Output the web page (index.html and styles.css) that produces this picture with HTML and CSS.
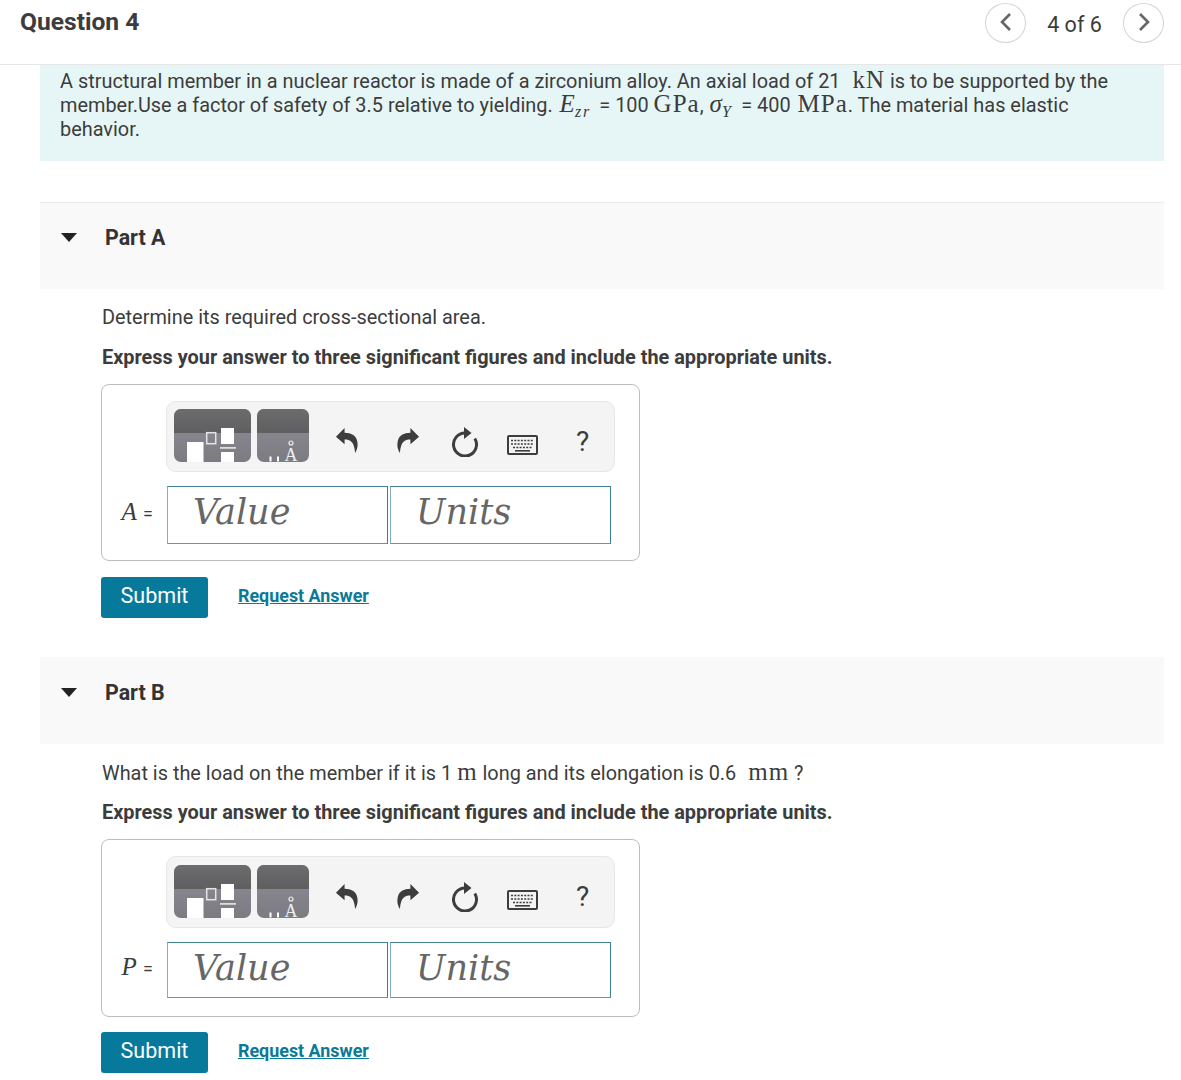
FILE: index.html
```html
<!DOCTYPE html>
<html lang="en">
<head>
    <meta charset="UTF-8">
    <meta name="viewport" content="width=device-width, initial-scale=1.0">
    <title>Question 4</title>
    <link rel="stylesheet" href="styles.css">
</head>
<body>

    <!-- shared toolbar icons -->
    <svg class="icon-defs" width="0" height="0">
        <defs>
            <linearGradient id="tile-top" x1="0" y1="0" x2="0" y2="1">
                <stop offset="0" stop-color="#6c6c6e"/>
                <stop offset="1" stop-color="#5f5f60"/>
            </linearGradient>
            <linearGradient id="tile-bottom" x1="0" y1="0" x2="0" y2="1">
                <stop offset="0" stop-color="#8f8e97"/>
                <stop offset="1" stop-color="#7c7b82"/>
            </linearGradient>
            <symbol id="icon-templates" viewBox="0 0 77 53">
                <rect width="77" height="53" rx="7" fill="url(#tile-bottom)"/>
                <path d="M0 24V7a7 7 0 0 1 7-7h63a7 7 0 0 1 7 7v17z" fill="url(#tile-top)"/>
                <rect x="13" y="33" width="16.500" height="20" fill="#fff"/>
                <rect x="32.700" y="23.700" width="9" height="11" fill="none" stroke="#e4e4e6" stroke-width="1.500"/>
                <rect x="47" y="19" width="13" height="16" fill="#fff"/>
                <rect x="46" y="38" width="16" height="1.800" fill="#ddd"/>
                <rect x="47" y="43" width="13" height="10" fill="#fff"/>
            </symbol>
            <symbol id="icon-symbols" viewBox="0 0 52 53">
                <rect width="52" height="53" rx="7" fill="url(#tile-bottom)"/>
                <path d="M0 24V7a7 7 0 0 1 7-7h38a7 7 0 0 1 7 7v17z" fill="url(#tile-top)"/>
                <rect x="12.500" y="47.500" width="2" height="5" fill="#fff"/>
                <rect x="20" y="47.500" width="2" height="5" fill="#fff"/>
                <circle cx="34" cy="34" r="2" fill="none" stroke="#eee" stroke-width="1.200"/>
                <text x="34" y="52" class="tile-glyph">A</text>
            </symbol>
            <symbol id="icon-undo" viewBox="0 0 24 28">
                <path d="M10 1L1 10l9 8v-5c6 0 10 2 11 14 3-5 3-9 2-13-1-5-6-8-13-8z" fill="#3d3d3d"/>
            </symbol>
            <symbol id="icon-reload" viewBox="0 0 28 30">
                <path d="M14 6a11.500 11.500 0 1 0 9.800 5.500" fill="none" stroke="#3d3d3d" stroke-width="3"/>
                <path d="M13 0l7.500 6-7.500 6z" fill="#3d3d3d"/>
            </symbol>
            <symbol id="icon-keyboard" viewBox="0 0 31 20">
                <rect x="1" y="1" width="29" height="18" rx="1" fill="#f4f4f4" stroke="#3d3d3d" stroke-width="2"/>
                <path d="M4 5.500h23M4 9h23M6 12.500h19" stroke="#3d3d3d" stroke-width="1.600" stroke-dasharray="2 1.300" fill="none"/>
                <path d="M8 15.800h15" stroke="#3d3d3d" stroke-width="1.600" fill="none"/>
            </symbol>
        </defs>
    </svg>

    <header class="top-bar">
        <h1 class="question-title">Question 4</h1>
        <nav class="pager">
            <button class="pager-btn" aria-label="Previous">
                <svg class="pager-icon" width="14" height="20" viewBox="0 0 14 20"><path d="M11 2L3 10l8 8" fill="none" stroke="#666" stroke-width="2.600"/></svg>
            </button>
            <span class="pager-count">4 of 6</span>
            <button class="pager-btn" aria-label="Next">
                <svg class="pager-icon" width="14" height="20" viewBox="0 0 14 20"><path d="M3 2l8 8-8 8" fill="none" stroke="#666" stroke-width="2.600"/></svg>
            </button>
        </nav>
    </header>

    <main class="content">
        <div class="intro">
            A structural member in a nuclear reactor is made of a zirconium alloy. An axial load of 21 <span class="unit unit-gap">kN</span> is to be supported by the<br>
            member.Use a factor of safety of 3.5 relative to yielding. <span class="math-var math-e">E</span><sub class="math-sub math-sub-zr">zr</sub> = 100 <span class="unit">GPa</span>, <span class="math-var math-sigma">σ</span><sub class="math-sub math-sub-y">Y</sub> = 400 <span class="unit unit-mpa">MPa</span>. The material has elastic<br>
            behavior.
        </div>

        <section class="part part-a">
            <div class="part-head">
                <span class="caret"></span>
                <h2 class="part-title">Part A</h2>
            </div>
            <div class="part-body">
                <p class="prompt">Determine its required cross-sectional area.</p>
                <p class="prompt prompt-bold">Express your answer to three significant figures and include the appropriate units.</p>
                <div class="answer-box">
                    <div class="toolbar">
                        <svg class="tile-wide"><use href="#icon-templates"/></svg>
                        <svg class="tile-narrow"><use href="#icon-symbols"/></svg>
                        <span class="tool"><svg class="tool-arrow"><use href="#icon-undo"/></svg></span>
                        <span class="tool"><svg class="tool-arrow flip"><use href="#icon-undo"/></svg></span>
                        <span class="tool"><svg class="tool-reload"><use href="#icon-reload"/></svg></span>
                        <span class="tool"><svg class="tool-keyboard"><use href="#icon-keyboard"/></svg></span>
                        <span class="tool tool-help">?</span>
                    </div>
                    <div class="answer-row">
                        <span class="answer-label"><i>A</i> <span class="equals">=</span></span>
                        <div class="field">Value</div>
                        <div class="field">Units</div>
                    </div>
                </div>
                <div class="actions">
                    <button class="submit-btn">Submit</button>
                    <a class="request-link" href="#">Request Answer</a>
                </div>
            </div>
        </section>

        <section class="part part-b">
            <div class="part-head">
                <span class="caret"></span>
                <h2 class="part-title">Part B</h2>
            </div>
            <div class="part-body">
                <p class="prompt">What is the load on the member if it is 1 <span class="unit">m</span> long and its elongation is 0.6 <span class="unit unit-gap">mm</span> ?</p>
                <p class="prompt prompt-bold">Express your answer to three significant figures and include the appropriate units.</p>
                <div class="answer-box">
                    <div class="toolbar">
                        <svg class="tile-wide"><use href="#icon-templates"/></svg>
                        <svg class="tile-narrow"><use href="#icon-symbols"/></svg>
                        <span class="tool"><svg class="tool-arrow"><use href="#icon-undo"/></svg></span>
                        <span class="tool"><svg class="tool-arrow flip"><use href="#icon-undo"/></svg></span>
                        <span class="tool"><svg class="tool-reload"><use href="#icon-reload"/></svg></span>
                        <span class="tool"><svg class="tool-keyboard"><use href="#icon-keyboard"/></svg></span>
                        <span class="tool tool-help">?</span>
                    </div>
                    <div class="answer-row">
                        <span class="answer-label"><i>P</i> <span class="equals">=</span></span>
                        <div class="field">Value</div>
                        <div class="field">Units</div>
                    </div>
                </div>
                <div class="actions">
                    <button class="submit-btn">Submit</button>
                    <a class="request-link" href="#">Request Answer</a>
                </div>
            </div>
        </section>
    </main>

</body>
</html>
```

FILE: styles.css
```css
body {
    font-family: Roboto, Arial, sans-serif;
    font-size: 19.900px;
    line-height: 24px;
    color: #3c3c3c;
    margin: 0;
    padding: 0;
    background-color: white;
}

.icon-defs {
    position: absolute;
}

.tile-glyph {
    font-family: "Liberation Serif", serif;
    font-size: 18px;
    text-anchor: middle;
    fill: #eee;
}

.top-bar {
    display: flex;
    justify-content: space-between;
    height: 61px;
    padding: 3px 17px 0 20px;
    border-bottom: 1px solid #e6e6e6;
}

.question-title {
    font-size: 24.600px;
    line-height: 38px;
    font-weight: 700;
    color: #3c3c3c;
    margin: 0;
}

.pager {
    display: flex;
    align-items: flex-start;
}

.pager-btn {
    width: 41px;
    height: 40px;
    padding: 0;
    background-color: white;
    border: 1px solid #d4d4d4;
    border-radius: 50%;
    display: flex;
    justify-content: center;
    align-items: center;
}

.pager-icon {
    margin-bottom: 3px;
}

.pager-count {
    width: 97px;
    text-align: center;
    font-size: 21.500px;
    line-height: 44px;
}

.content {
    padding: 0 17px 0 40px;
}

.intro {
    background-color: #e6f6f7;
    padding: 5px 20px 19px;
    height: 72px;
}

.unit {
    font-family: "Liberation Serif", serif;
    font-size: 25px;
    letter-spacing: 1px;
    line-height: 0;
}

.unit-gap {
    margin-left: 7px;
}

.unit-mpa {
    margin-left: 2px;
}

.math-var {
    font-family: "Liberation Serif", serif;
    font-style: italic;
    font-size: 25px;
    line-height: 0;
}

.math-e {
    margin-left: 2px;
}

.math-sigma {
    margin-left: 1px;
}

.math-sub {
    font-family: "Liberation Serif", serif;
    font-style: italic;
    font-size: 16px;
    letter-spacing: 1.500px;
    line-height: 0;
}

.math-sub-zr {
    letter-spacing: 2px;
    margin-right: 3px;
}

.math-sub-y {
    margin-right: 4px;
}

.part-a {
    margin-top: 41px;
}

.part-b {
    margin-top: 39px;
}

.part-head {
    display: flex;
    height: 87px;
    padding-top: 23px;
    box-sizing: border-box;
    background-color: #f9f9f9;
    border-top: 1px solid #ececec;
}

.part-b .part-head {
    border-top-color: #f9f9f9;
}

.caret {
    width: 0;
    height: 0;
    margin: 7px 28px 0 21px;
    border-left: 8px solid transparent;
    border-right: 8px solid transparent;
    border-top: 9px solid #222;
}

.part-title {
    font-size: 21.400px;
    line-height: 24px;
    font-weight: 700;
    color: #333;
    margin: 0;
}

.part-body {
    padding: 17px 0 0 61px;
}

.part-b .part-body {
    padding-top: 18px;
}

.prompt {
    margin: 0 0 16px 1px;
}

.part-b .prompt {
    margin-bottom: 15px;
}

.prompt-bold,
.part-b .prompt-bold {
    font-weight: 700;
    margin-bottom: 14px;
}

.answer-box {
    width: 539px;
    padding: 16px 0 16px 64px;
    box-sizing: border-box;
    border: 1px solid #bdbdbd;
    border-radius: 8px;
}

.part-b .answer-box {
    padding-bottom: 18px;
}

.toolbar {
    display: flex;
    align-items: center;
    width: 449px;
    height: 71px;
    padding: 0 0 2px 7px;
    box-sizing: border-box;
    background-color: #f4f4f4;
    border: 1px solid #e6e6e6;
    border-radius: 10px;
}

.part-b .toolbar {
    height: 72px;
}

.tile-wide {
    width: 77px;
    height: 53px;
    margin-right: 6px;
}

.tile-narrow {
    width: 52px;
    height: 53px;
    margin-right: 8px;
}

.tool {
    width: 59px;
    display: flex;
    justify-content: center;
    align-items: center;
}

.tool-arrow {
    width: 23px;
    height: 27px;
    margin-top: 10px;
}

.flip {
    margin-left: 5px;
    transform: scaleX(-1);
}

.tool-reload {
    width: 28px;
    height: 30px;
    margin-top: 12px;
}

.tool-keyboard {
    width: 31px;
    height: 20px;
    margin: 18px 2px 0 0;
}

.tool-help {
    font-size: 28px;
    line-height: 30px;
    margin-top: 12px;
}

.answer-row {
    display: flex;
    margin: 14px 0 0 -64px;
}

.answer-label {
    width: 65px;
    padding: 0 14px 4px 0;
    box-sizing: border-box;
    text-align: right;
    align-self: center;
    font-family: "Liberation Serif", serif;
    font-size: 25px;
}

.equals {
    font-family: Roboto, Arial, sans-serif;
    font-size: 18px;
}

.field {
    width: 221px;
    height: 58px;
    margin-right: 2px;
    padding-left: 25px;
    box-sizing: border-box;
    border: 1px solid #3e8092;
    border-left-color: #7fb0bd;
    border-bottom-color: #5f98a8;
    font-family: "DejaVu Serif", serif;
    font-style: italic;
    font-size: 35px;
    line-height: 50px;
    color: #666;
}

.part-b .field {
    height: 56px;
}

.actions {
    display: flex;
    align-items: center;
    margin-top: 16px;
}

.part-b .actions {
    margin-top: 15px;
}

.submit-btn {
    width: 107px;
    height: 41px;
    padding: 0 0 4px;
    background-color: #077a9c;
    color: white;
    border: none;
    border-radius: 3px;
    font-family: Roboto, Arial, sans-serif;
    font-size: 21.500px;
}

.request-link {
    margin: 0 0 4px 30px;
    font-size: 17.900px;
    font-weight: 700;
    color: #0a7a96;
    text-decoration: underline;
}
```
